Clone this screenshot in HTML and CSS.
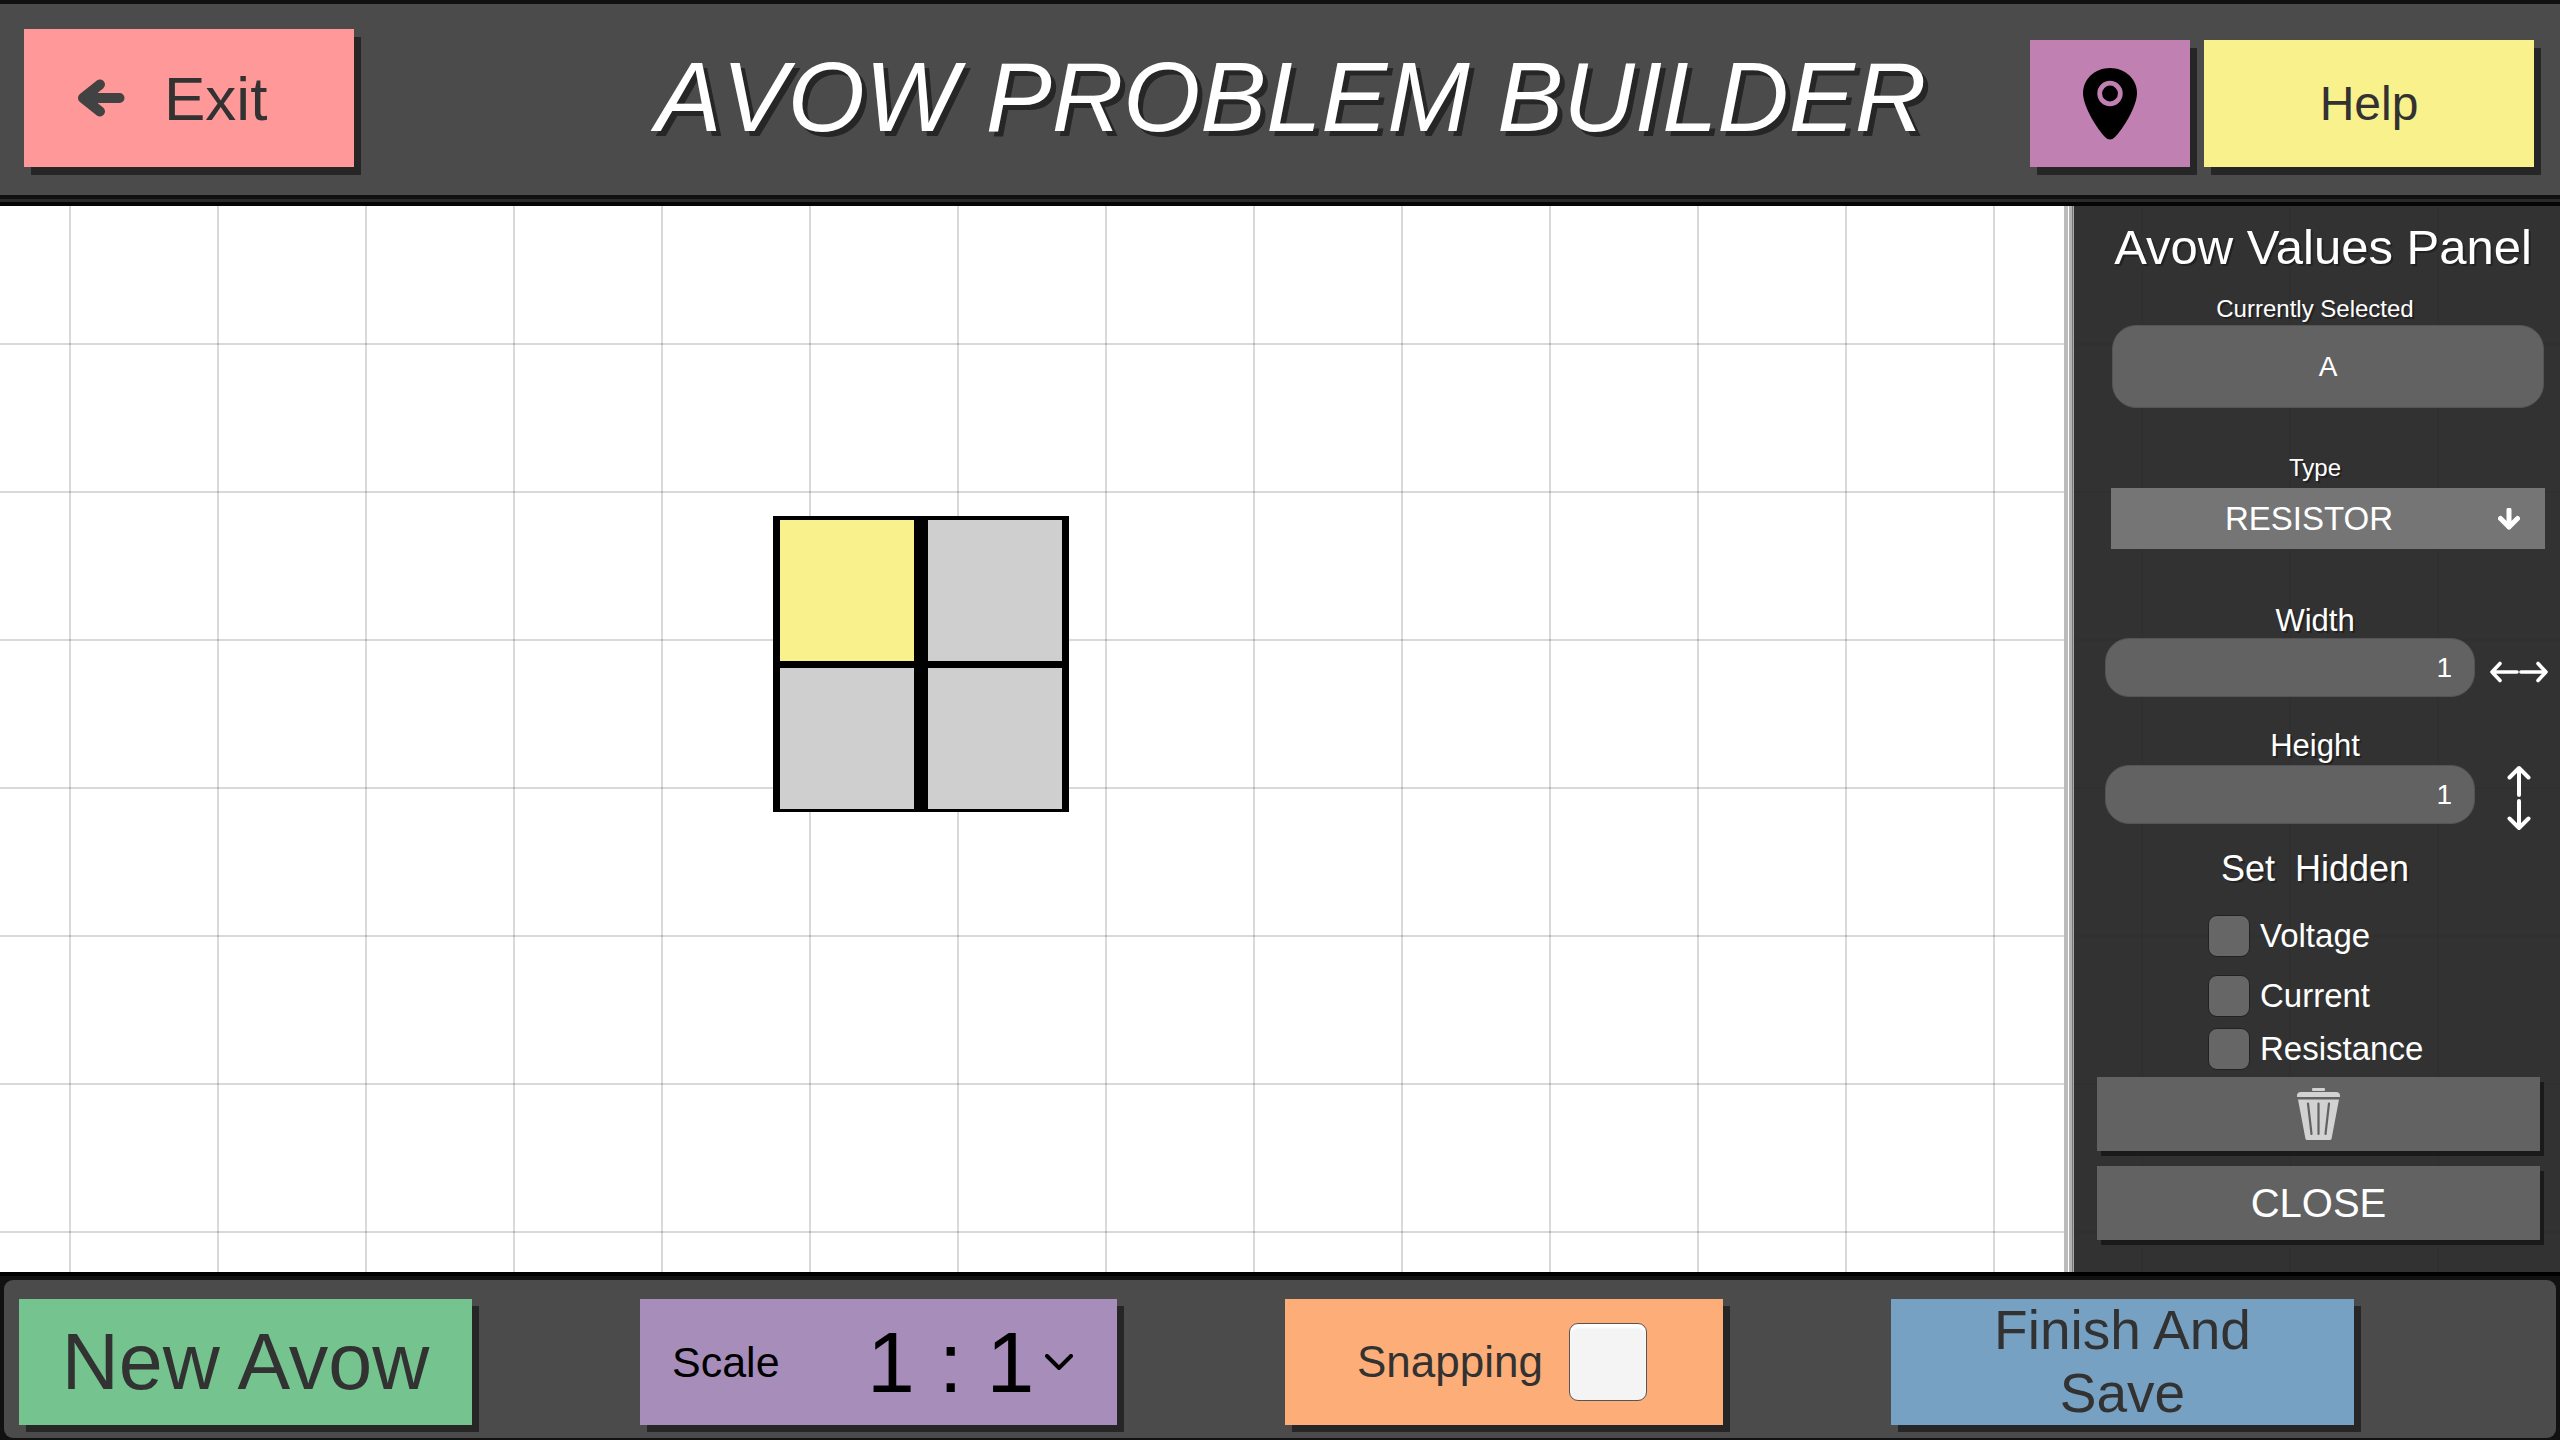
FILE: index.html
```html
<!DOCTYPE html>
<html lang="en">
<head>
<meta charset="utf-8">
<title>Avow Problem Builder</title>
<link rel="stylesheet" href="styles.css">
</head>
<body>
<header class="topbar">
  <button class="block exit" type="button">
    <svg class="exit-icon" viewBox="0 0 50 38" aria-hidden="true"><path d="M44.500 19H8M25 5.500L8 19l17 13.500M18 13v12" fill="none" stroke="#424242" stroke-width="10" stroke-linecap="round" stroke-linejoin="round"/><path d="M8 19L20 10v18z" fill="#424242"/></svg>
    <span>Exit</span>
  </button>
  <h1 class="title">AVOW PROBLEM BUILDER</h1>
  <div class="top-actions">
    <button class="block pin" type="button" aria-label="Locate">
      <svg class="pin-icon" viewBox="0 0 54 72" aria-hidden="true"><path d="M27 0C12 0 0 11 0 25c0 14 15 37 22 44q5 5 10 0c7-7 22-30 22-44C54 11 42 0 27 0z"/><circle cx="27" cy="25.500" r="10.300" fill="none" stroke="#c080b1" stroke-width="4.800"/></svg>
    </button>
    <button class="block help" type="button">Help</button>
  </div>
</header>

<main class="workspace">
  <div class="board">
    <button class="avow selected" type="button" aria-label="Avow A" style="left:773px;top:310px"></button>
    <button class="avow" type="button" aria-label="Avow B" style="left:921px;top:310px"></button>
    <button class="avow" type="button" aria-label="Avow C" style="left:773px;top:458px"></button>
    <button class="avow" type="button" aria-label="Avow D" style="left:921px;top:458px"></button>
  </div>
  <aside class="panel">
    <h2 class="panel-title">Avow Values Panel</h2>
    <label class="caption" for="selected">Currently Selected</label>
    <input class="field name" id="selected" type="text" value="A">
    <label class="caption type-caption" for="type">Type</label>
    <div class="type">
      <select id="type"><option>RESISTOR</option></select>
      <svg class="type-arrow" viewBox="0 0 22 22" aria-hidden="true"><path d="M11 2v17M2.500 10.500L11 19l8.500-8.500" fill="none" stroke="#fff" stroke-width="5" stroke-linecap="round" stroke-linejoin="round"/></svg>
    </div>
    <label class="label width-label" for="width">Width</label>
    <div class="dimension">
      <input class="field" id="width" type="text" value="1">
      <svg class="arrows-h" viewBox="0 0 60 22" aria-hidden="true"><path d="M3 11H28M11 2.500L3 11l8 8.500M32 11H57M49 2.500L57 11l-8 8.500" fill="none" stroke="#fff" stroke-width="3.600" stroke-linecap="round" stroke-linejoin="round"/></svg>
    </div>
    <label class="label height-label" for="height">Height</label>
    <div class="dimension">
      <input class="field" id="height" type="text" value="1">
      <svg class="arrows-v" viewBox="0 0 24 66" aria-hidden="true"><path d="M12 3v27M2.500 12.500L12 3l9.500 9.500M12 36v27M2.500 53.500L12 63l9.500-9.500" fill="none" stroke="#fff" stroke-width="4" stroke-linecap="round" stroke-linejoin="round"/></svg>
    </div>
    <h3 class="hidden-title">Set&nbsp; Hidden</h3>
    <div class="checks">
      <label class="check"><input type="checkbox">Voltage</label>
      <label class="check current"><input type="checkbox">Current</label>
      <label class="check"><input type="checkbox">Resistance</label>
    </div>
    <button class="panel-button" type="button" aria-label="Delete">
      <svg class="trash" viewBox="0 0 43 52" aria-hidden="true"><g fill="#d2d2d2"><rect x="15" y="0" width="13" height="3" rx="1"/><path d="M0 9V7.500Q0 4 4 4H39Q43 4 43 7.500V9zM1 11.500H42L34.500 51Q34 52 33 52H10Q9 52 8.500 51z"/></g><path d="M11 15.500L14.500 46M21.500 15.500V46M32 15.500L28.500 46" stroke="#626262" stroke-width="2.200" stroke-linecap="round"/></svg>
    </button>
    <button class="panel-button close" type="button">CLOSE</button>
  </aside>
</main>

<footer class="bottombar">
  <div class="tray">
    <button class="block new" type="button">New Avow</button>
    <div class="block scale">
      <label for="scale">Scale</label>
      <select id="scale"><option>1 : 1</option></select>
      <svg class="chevron" viewBox="0 0 28 16" aria-hidden="true"><path d="M2 2l12 12L26 2" fill="none" stroke="#000" stroke-width="4" stroke-linecap="round"/></svg>
    </div>
    <label class="block snapping">Snapping<input type="checkbox"></label>
    <button class="block finish" type="button">Finish And Save</button>
  </div>
</footer>
</body>
</html>
```
FILE: styles.css
```css
* { box-sizing: border-box; }

body {
  margin: 0;
  min-height: 100vh;
  display: flex;
  flex-direction: column;
  background: #000;
  color: #fff;
  font-family: "Liberation Sans", Arial, sans-serif;
}

button, input, select {
  margin: 0;
  padding: 0;
  border: 0;
  border-radius: 0;
  font-family: inherit;
  color: inherit;
}

h1, h2, h3 { margin: 0; font-weight: 400; }
svg { display: block; flex: none; }

.block {
  color: #323232;
  box-shadow: 7px 8px 0 #262626;
}

/* Top bar */
.topbar {
  display: grid;
  grid-template-columns: 1fr auto 1fr;
  align-items: end;
  height: 206px;
  padding: 0 26px 28px 24px;
  background: #4b4b4b;
  border-top: 4px solid #111;
  border-bottom: 4px solid #050505;
  box-shadow: inset 0 -3px #2a2a2a, inset 0 -7px #111;
}

.topbar .block { margin-bottom: 7px; }

.exit {
  display: flex;
  align-items: center;
  gap: 39px;
  width: 330px;
  height: 138px;
  padding-left: 51px;
  background: #f99;
  font-size: 62px;
}

.exit-icon { width: 50px; height: 38px; }

.title {
  align-self: start;
  padding: 35px 0 0 24px;
  font-size: 99px;
  line-height: 116px;
  font-style: italic;
  font-kerning: none;
  white-space: nowrap;
  text-shadow: 5px 5px #262626;
}

.top-actions {
  display: flex;
  justify-content: flex-end;
  gap: 14px;
}

.pin {
  display: grid;
  place-items: center;
  width: 160px;
  height: 127px;
  background: #c080b1;
}

.pin-icon { width: 54px; height: 72px; }

.help {
  width: 330px;
  height: 127px;
  background: #f9f18c;
  font-size: 48px;
}

/* Workspace */
.workspace {
  flex: 1;
  display: flex;
  background:
    linear-gradient(to right, rgba(0, 0, 0, .15) 2px, transparent 2px) 69px 0 / 148px 148px,
    linear-gradient(rgba(0, 0, 0, .15) 2px, transparent 2px) 0 137px / 148px 148px,
    #fff;
}

.board { position: relative; flex: 1; }

.avow {
  position: absolute;
  width: 148px;
  height: 148px;
  border: solid #000;
  border-width: 4px 7px 3px;
  background: #cfcfcf;
}

.avow.selected { background: #f9f18c; }

/* Values panel */
.panel {
  flex: 0 0 486px;
  display: flex;
  flex-direction: column;
  padding: 11px 11px 32px 23px;
  background: rgba(37, 37, 37, .94);
  box-shadow: -1px 0 #aaa, -2px 0 #777, -5px 0 #b3b3b3, -6px 0 #fff, -10px 0 #bbb;
}

.panel-title, .caption, .label, .hidden-title {
  text-align: center;
  text-shadow: 2px 2px #222;
}

.panel-title { font-size: 49px; line-height: 60px; }

.caption, .label, .hidden-title { padding-right: 16px; }

.caption {
  margin: 18px 0 2px;
  font-size: 24px;
  line-height: 28px;
}

.type-caption { margin: 46px 0 6px; }

.field {
  height: 59px;
  border: 1px solid #545454;
  border-radius: 24px;
  background: #626262;
  font-size: 28px;
}

.name {
  height: 83px;
  margin: 0 5px 0 15px;
  text-align: center;
}

.type {
  position: relative;
  margin: 0 4px 0 14px;
}

.type select {
  display: block;
  appearance: none;
  width: 100%;
  height: 61px;
  padding-right: 38px;
  background: #757575;
  font-size: 33px;
  text-align: center;
}

.type-arrow {
  position: absolute;
  right: 25px;
  top: 20px;
  width: 22px;
  height: 22px;
  pointer-events: none;
}

.label { font-size: 31px; line-height: 34px; }
.width-label { margin-top: 55px; }
.height-label { margin: 32px 0 2px; }

.dimension {
  display: grid;
  grid-template: 59px / 1fr 60px;
  gap: 14px;
  padding-left: 8px;
  align-items: center;
  justify-items: center;
}

.dimension .field {
  width: 100%;
  padding-right: 22px;
  text-align: right;
}

.arrows-h { width: 60px; height: 22px; margin-top: 8px; }
.arrows-v { width: 24px; height: 66px; margin-top: 6px; }

.hidden-title {
  margin-top: 24px;
  font-size: 36px;
  line-height: 42px;
}

.checks { padding: 25px 0 7px 111px; }

.check {
  display: flex;
  align-items: center;
  gap: 10px;
  height: 42px;
  font-size: 33px;
}

.current { margin: 18px 0 11px; }

.check input, .snapping input {
  appearance: none;
  width: 42px;
  height: 42px;
  border: 1px solid #222;
  border-radius: 9px;
  background: #666;
}

.panel-button {
  display: grid;
  place-items: center;
  height: 74px;
  margin-right: 9px;
  background: #626262;
  box-shadow: 4px 5px #1a1a1a;
  font-size: 40px;
}

.close { margin-top: 15px; }
.trash { width: 43px; height: 52px; }

/* Bottom bar */
.bottombar {
  padding: 4px 4px 2px;
  background: #111;
  border-top: 4px solid #000;
}

.tray {
  display: flex;
  gap: 168px;
  height: 158px;
  padding: 19px 15px;
  border-radius: 9px;
  background: #4b4b4b;
}

.tray .block {
  height: 126px;
  box-shadow: 7px 7px #262626;
}

.new {
  flex: 0 1 453px;
  background: #75c48f;
  font-size: 79px;
}

.scale {
  flex: 0 1 477px;
  display: flex;
  align-items: center;
  padding: 0 44px 0 32px;
  background: #a78db9;
  color: #000;
  font-size: 43px;
}

.scale select {
  appearance: none;
  margin-left: auto;
  padding-right: 10px;
  background: transparent;
  font-size: 86px;
}

.chevron { width: 28px; height: 16px; }

.snapping {
  flex: 0 1 438px;
  display: flex;
  align-items: center;
  justify-content: center;
  gap: 26px;
  padding-right: 4px;
  background: #fdad77;
  font-size: 44px;
}

.snapping input {
  width: 78px;
  height: 78px;
  border-color: #555;
  background: #f4f4f4;
  box-shadow: inset 0 4px 2px #fff;
}

.finish {
  flex: 0 1 463px;
  padding: 0 80px;
  background: #76a1c3;
  font-size: 55px;
  line-height: 63px;
}
```
